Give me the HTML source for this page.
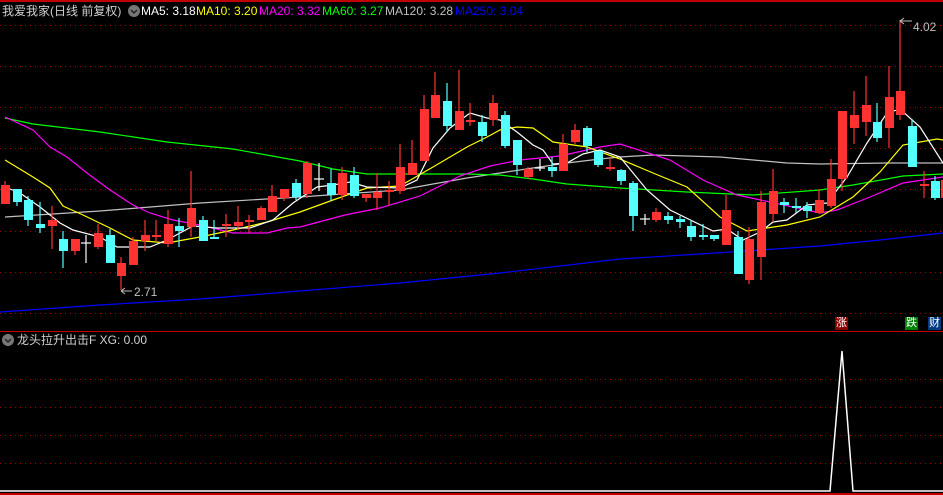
<!DOCTYPE html><html><head><meta charset="utf-8"><style>
html,body{margin:0;padding:0;background:#000;}
body{width:943px;height:495px;overflow:hidden;position:relative;font-family:"Liberation Sans","Noto Sans CJK SC",sans-serif;}
.t{position:absolute;font-size:12px;white-space:nowrap;line-height:14px}
.b{position:absolute;width:13px;height:13px;font-size:11px;line-height:13px;text-align:center;color:#fff}
</style></head><body>
<svg width="943" height="495" style="position:absolute;left:0;top:0">
<rect x="0" y="0" width="943" height="2" fill="#c00000"/>
<g stroke="#a00000" stroke-width="1" stroke-dasharray="1,4">
<line x1="0" x2="943" y1="25.5" y2="25.5"/><line x1="0" x2="943" y1="66.5" y2="66.5"/><line x1="0" x2="943" y1="107.5" y2="107.5"/><line x1="0" x2="943" y1="148.5" y2="148.5"/><line x1="0" x2="943" y1="189.5" y2="189.5"/><line x1="0" x2="943" y1="231.5" y2="231.5"/><line x1="0" x2="943" y1="272.5" y2="272.5"/><line x1="0" x2="943" y1="313.5" y2="313.5"/>
<line x1="0" x2="943" y1="379.5" y2="379.5"/><line x1="0" x2="943" y1="407.5" y2="407.5"/><line x1="0" x2="943" y1="435.5" y2="435.5"/><line x1="0" x2="943" y1="463.5" y2="463.5"/>
</g>
<rect x="0" y="331" width="943" height="1" fill="#c00000"/>
<rect x="0" y="493" width="943" height="2" fill="#c00000"/>
<g fill="none" stroke-width="1.2">
<polyline stroke="#0000ff" points="0,312 100,305 200,299 300,291 400,283 500,273 620,259 700,254 760,250 820,246 880,240 943,233"/>
<polyline stroke="#c0c0c0" points="5,217 100,211 200,203 300,197 400,190 433,184 467,178 500,173 533,168 567,163 600,159 620,157 653,155 720,157 787,163 820,164 887,163 943,163"/>
<polyline stroke="#00ff00" points="5,118 33,124 100,132 167,142 233,149 300,161 333,169 367,174 433,174 467,174 500,175 533,179 567,184 620,188 687,192 753,195 820,190 853,185 903,176 943,174"/>
<polyline stroke="#ff00ff" points="5,117 33,130 50,147 67,157 87,173 110,190 133,205 150,213 173,220 200,225 233,233 267,233 287,228 300,227 345,215 380,208 420,196 460,176 490,166 520,160 560,156 600,147 620,144 670,160 703,180 737,195 770,202 820,213 837,210 870,197 903,183 943,177"/>
<polyline stroke="#ffff00" points="5,160 33,177 50,188 63,206 83,215 110,228 133,240 167,243 200,237 233,230 267,222 300,212 333,200 367,188 400,186 433,167 467,147 487,137 500,130 517,127 533,128 553,142 587,147 620,159 653,173 687,187 720,217 747,231 787,225 820,217 853,197 880,172 903,145 937,139 943,140"/>
<polyline stroke="#ffffff" points="5,187 20,193 40,207 60,223 73,230 100,237 117,247 150,247 167,240 193,226 217,228 250,228 273,220 293,203 317,187 333,185 350,182 367,187 400,188 417,180 433,148 450,128 470,113 487,118 500,120 517,132 533,145 543,150 553,164 567,163 583,154 600,150 620,157 647,190 670,210 713,231 727,229 743,240 760,232 773,222 787,220 807,205 827,203 847,177 867,143 887,113 900,109 920,127 943,163"/>
</g>
<g stroke="#ff3232" stroke-width="1.2">
<line x1="5" x2="5" y1="181" y2="204"/><line x1="52" x2="52" y1="206" y2="249"/><line x1="75" x2="75" y1="239" y2="255"/><line x1="98" x2="98" y1="224" y2="249"/><line x1="121" x2="121" y1="257" y2="290"/><line x1="133" x2="133" y1="237" y2="265"/><line x1="145" x2="145" y1="220" y2="251"/><line x1="156" x2="156" y1="220" y2="241"/><line x1="168" x2="168" y1="210" y2="247"/><line x1="191" x2="191" y1="171" y2="237"/><line x1="226" x2="226" y1="214" y2="237"/><line x1="238" x2="238" y1="206" y2="230"/><line x1="249" x2="249" y1="215" y2="233"/><line x1="261" x2="261" y1="206" y2="220"/><line x1="272" x2="272" y1="185" y2="212"/><line x1="284" x2="284" y1="189" y2="201"/><line x1="307" x2="307" y1="161" y2="198"/><line x1="342" x2="342" y1="167" y2="200"/><line x1="366" x2="366" y1="194" y2="202"/><line x1="377" x2="377" y1="173" y2="210"/><line x1="389" x2="389" y1="181" y2="206"/><line x1="400" x2="400" y1="144" y2="194"/><line x1="412" x2="412" y1="140" y2="175"/><line x1="424" x2="424" y1="95" y2="161"/><line x1="435" x2="435" y1="72" y2="118"/><line x1="459" x2="459" y1="70" y2="130"/><line x1="470" x2="470" y1="103" y2="126"/><line x1="493" x2="493" y1="95" y2="126"/><line x1="528" x2="528" y1="167" y2="179"/><line x1="563" x2="563" y1="134" y2="171"/><line x1="575" x2="575" y1="124" y2="144"/><line x1="610" x2="610" y1="158" y2="171"/><line x1="656" x2="656" y1="208" y2="222"/><line x1="726" x2="726" y1="195" y2="245"/><line x1="749" x2="749" y1="227" y2="284"/><line x1="761" x2="761" y1="191" y2="280"/><line x1="773" x2="773" y1="169" y2="222"/><line x1="819" x2="819" y1="189" y2="214"/><line x1="831" x2="831" y1="159" y2="208"/><line x1="842" x2="842" y1="111" y2="191"/><line x1="854" x2="854" y1="91" y2="144"/><line x1="866" x2="866" y1="76" y2="136"/><line x1="889" x2="889" y1="66" y2="148"/><line x1="900" x2="900" y1="20" y2="120"/><line x1="924" x2="924" y1="171" y2="198"/>
</g>
<g fill="#ff3232">
<rect x="1" y="185" width="9" height="19"/><rect x="48" y="220" width="9" height="6"/><rect x="71" y="239" width="9" height="12"/><rect x="94" y="233" width="9" height="14"/><rect x="117" y="263" width="9" height="13"/><rect x="129" y="241" width="9" height="24"/><rect x="141" y="235" width="9" height="6"/><rect x="152" y="235" width="9" height="2"/><rect x="164" y="224" width="9" height="20"/><rect x="187" y="208" width="9" height="19"/><rect x="222" y="224" width="9" height="2"/><rect x="234" y="222" width="9" height="4"/><rect x="245" y="220" width="9" height="2"/><rect x="257" y="208" width="9" height="12"/><rect x="268" y="196" width="9" height="16"/><rect x="280" y="189" width="9" height="9"/><rect x="303" y="163" width="9" height="31"/><rect x="338" y="173" width="9" height="22"/><rect x="362" y="194" width="9" height="4"/><rect x="373" y="192" width="9" height="6"/><rect x="385" y="190" width="9" height="2"/><rect x="396" y="167" width="9" height="24"/><rect x="408" y="163" width="9" height="12"/><rect x="420" y="109" width="9" height="52"/><rect x="431" y="95" width="9" height="23"/><rect x="455" y="111" width="9" height="19"/><rect x="466" y="120" width="9" height="2"/><rect x="489" y="103" width="9" height="17"/><rect x="524" y="169" width="9" height="8"/><rect x="559" y="144" width="9" height="27"/><rect x="571" y="130" width="9" height="12"/><rect x="606" y="167" width="9" height="2"/><rect x="652" y="212" width="9" height="8"/><rect x="722" y="210" width="9" height="35"/><rect x="745" y="239" width="9" height="41"/><rect x="757" y="202" width="9" height="55"/><rect x="769" y="191" width="9" height="23"/><rect x="815" y="200" width="9" height="13"/><rect x="827" y="179" width="9" height="27"/><rect x="838" y="111" width="9" height="68"/><rect x="850" y="115" width="9" height="13"/><rect x="862" y="105" width="9" height="17"/><rect x="885" y="97" width="9" height="31"/><rect x="896" y="91" width="9" height="24"/><rect x="920" y="184" width="9" height="2"/><rect x="941" y="180" width="3" height="18"/>
</g>
<g stroke="#54ffff" stroke-width="1.2">
<line x1="17" x2="17" y1="189" y2="206"/><line x1="28" x2="28" y1="196" y2="226"/><line x1="40" x2="40" y1="202" y2="233"/><line x1="63" x2="63" y1="231" y2="268"/><line x1="110" x2="110" y1="229" y2="263"/><line x1="179" x2="179" y1="218" y2="247"/><line x1="203" x2="203" y1="216" y2="241"/><line x1="214" x2="214" y1="220" y2="239"/><line x1="296" x2="296" y1="179" y2="200"/><line x1="331" x2="331" y1="169" y2="201"/><line x1="354" x2="354" y1="167" y2="198"/><line x1="447" x2="447" y1="83" y2="132"/><line x1="482" x2="482" y1="115" y2="142"/><line x1="505" x2="505" y1="111" y2="148"/><line x1="517" x2="517" y1="140" y2="175"/><line x1="552" x2="552" y1="157" y2="177"/><line x1="587" x2="587" y1="126" y2="152"/><line x1="598" x2="598" y1="151" y2="167"/><line x1="621" x2="621" y1="169" y2="185"/><line x1="633" x2="633" y1="181" y2="231"/><line x1="668" x2="668" y1="212" y2="224"/><line x1="680" x2="680" y1="216" y2="228"/><line x1="691" x2="691" y1="220" y2="241"/><line x1="703" x2="703" y1="224" y2="240"/><line x1="714" x2="714" y1="235" y2="241"/><line x1="738" x2="738" y1="231" y2="274"/><line x1="784" x2="784" y1="198" y2="213"/><line x1="796" x2="796" y1="198" y2="213"/><line x1="807" x2="807" y1="202" y2="218"/><line x1="877" x2="877" y1="103" y2="142"/><line x1="912" x2="912" y1="119" y2="167"/><line x1="935" x2="935" y1="176" y2="200"/>
</g>
<g fill="#54ffff">
<rect x="13" y="189" width="9" height="13"/><rect x="24" y="200" width="9" height="20"/><rect x="36" y="224" width="9" height="4"/><rect x="59" y="239" width="9" height="12"/><rect x="106" y="235" width="9" height="28"/><rect x="175" y="226" width="9" height="5"/><rect x="199" y="220" width="9" height="21"/><rect x="210" y="237" width="9" height="2"/><rect x="292" y="183" width="9" height="14"/><rect x="327" y="183" width="9" height="12"/><rect x="350" y="175" width="9" height="21"/><rect x="443" y="101" width="9" height="25"/><rect x="478" y="122" width="9" height="14"/><rect x="501" y="115" width="9" height="31"/><rect x="513" y="140" width="9" height="25"/><rect x="548" y="167" width="9" height="4"/><rect x="583" y="128" width="9" height="18"/><rect x="594" y="151" width="9" height="14"/><rect x="617" y="170" width="9" height="11"/><rect x="629" y="183" width="9" height="33"/><rect x="664" y="216" width="9" height="4"/><rect x="676" y="219" width="9" height="3"/><rect x="687" y="226" width="9" height="11"/><rect x="699" y="235" width="9" height="2"/><rect x="710" y="235" width="9" height="4"/><rect x="734" y="237" width="9" height="37"/><rect x="780" y="202" width="9" height="3"/><rect x="792" y="206" width="9" height="2"/><rect x="803" y="206" width="9" height="5"/><rect x="873" y="122" width="9" height="16"/><rect x="908" y="126" width="9" height="41"/><rect x="931" y="181" width="9" height="17"/>
</g>
<g stroke="#fff" stroke-width="1.2">
<line x1="86" x2="86" y1="235" y2="263"/><line x1="81" x2="91" y1="243" y2="243"/>
<line x1="319" x2="319" y1="163" y2="191"/><line x1="314" x2="324" y1="179" y2="179"/>
<line x1="540" x2="540" y1="159" y2="171"/><line x1="535" x2="545" y1="168" y2="168"/>
<line x1="645" x2="645" y1="214" y2="225"/><line x1="640" x2="650" y1="219" y2="219"/>
</g>
<g stroke="#c0c0c0" fill="none" stroke-width="1"><path d="M121,291 H132 M121,291 l4,-3 M121,291 l4,3"/><path d="M900,21 H912 M900,21 l4,-3 M900,21 l4,3"/></g>
<polyline fill="none" stroke="#fff" stroke-width="1.5" points="0,491 830,491 842,351 853,491 943,491"/>
<circle cx="134" cy="11" r="6" fill="#777"/><path d="M131,10 l3,3 l3,-3" stroke="#222" stroke-width="1.5" fill="none"/>
<circle cx="8" cy="340" r="6" fill="#777"/><path d="M5,339 l3,3 l3,-3" stroke="#222" stroke-width="1.5" fill="none"/>
</svg>
<div class="t" style="left:2px;top:4px;color:#d0d0d0">我爱我家(日线 前复权)</div>
<div class="t" style="left:141px;top:4px;color:#fff">MA5: 3.18</div>
<div class="t" style="left:196px;top:4px;color:#ffff00">MA10: 3.20</div>
<div class="t" style="left:259px;top:4px;color:#ff00ff">MA20: 3.32</div>
<div class="t" style="left:322px;top:4px;color:#00ff00">MA60: 3.27</div>
<div class="t" style="left:385px;top:4px;color:#c0c0c0">MA120: 3.28</div>
<div class="t" style="left:455px;top:4px;color:#0000ff">MA250: 3.04</div>
<div class="t" style="left:134px;top:285px;color:#c0c0c0">2.71</div>
<div class="t" style="left:913px;top:20px;color:#c0c0c0">4.02</div>
<div class="t" style="left:17px;top:333px;color:#d0d0d0">龙头拉升出击F&nbsp;XG: 0.00</div>
<div class="b" style="left:835px;top:317px;background:#8b0000">涨</div>
<div class="b" style="left:905px;top:317px;background:#008000">跌</div>
<div class="b" style="left:928px;top:317px;background:#003a80">财</div>
</body></html>
